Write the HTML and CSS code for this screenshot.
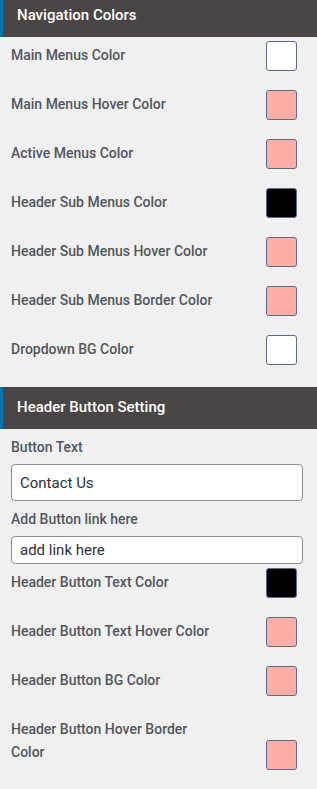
FILE: index.html
```html
<!DOCTYPE html>
<html lang="en">
<head>
  <meta charset="UTF-8">
  <meta name="viewport" content="width=device-width, initial-scale=1.0">
  <title>Header Settings</title>
  <link rel="stylesheet" href="styles.css">
</head>
<body>
  <div class="painel">
    <section class="grupo">
      <h3 class="grupo-titulo">Navigation Colors</h3>
      <div class="linha"><span class="rotulo">Main Menus Color</span><span class="amostra branco"></span></div>
      <div class="linha"><span class="rotulo">Main Menus Hover Color</span><span class="amostra rosa"></span></div>
      <div class="linha"><span class="rotulo">Active Menus Color</span><span class="amostra rosa"></span></div>
      <div class="linha"><span class="rotulo">Header Sub Menus Color</span><span class="amostra preto"></span></div>
      <div class="linha"><span class="rotulo">Header Sub Menus Hover Color</span><span class="amostra rosa"></span></div>
      <div class="linha"><span class="rotulo">Header Sub Menus Border Color</span><span class="amostra rosa"></span></div>
      <div class="linha"><span class="rotulo">Dropdown BG Color</span><span class="amostra branco"></span></div>
    </section>

    <section class="grupo">
      <h3 class="grupo-titulo">Header Button Setting</h3>
      <div class="campo">
        <label class="rotulo" for="btn-texto">Button Text</label>
        <input type="text" id="btn-texto" class="entrada alta" value="Contact Us">
      </div>
      <div class="campo">
        <label class="rotulo" for="btn-link">Add Button link here</label>
        <input type="text" id="btn-link" class="entrada" value="add link here">
      </div>
      <div class="linha"><span class="rotulo">Header Button Text Color</span><span class="amostra preto"></span></div>
      <div class="linha"><span class="rotulo">Header Button Text Hover Color</span><span class="amostra rosa"></span></div>
      <div class="linha"><span class="rotulo">Header Button BG Color</span><span class="amostra rosa"></span></div>
      <div class="linha dupla"><span class="rotulo">Header Button Hover Border Color</span><span class="amostra rosa"></span></div>
    </section>
  </div>
</body>
</html>
```

FILE: styles.css
```css
:root {
  --fundo: #f0f0f0;
  --titulo-fundo: #4a4645;
  --azul: #0a73aa;
  --texto: #50575e;
  --rosa: #ffaea7;
  --borda-amostra: #5b6a8a;
}

* {
  box-sizing: border-box;
  margin: 0;
  padding: 0;
}

body {
  font-family: Roboto, "Liberation Sans", sans-serif;
  background-color: var(--fundo);
  color: var(--texto);
  width: 317px;
  overflow: hidden;
}

.painel {
  margin-top: -5px;
}

.grupo {
  padding-bottom: 7px;
}

.grupo-titulo {
  height: 42px;
  line-height: 41px;
  padding-left: 14px;
  background-color: var(--titulo-fundo);
  border-left: 3px solid var(--azul);
  color: #fff;
  font-size: 15px;
  font-weight: 500;
}

.rotulo {
  display: block;
  font-size: 14px;
  font-weight: 500;
  line-height: 23px;
  color: var(--texto);
}

.linha {
  display: flex;
  align-items: flex-start;
  justify-content: space-between;
  padding: 4px 20px 15px 11px;
}

.linha .rotulo {
  padding-top: 2.5px;
  max-width: 205px;
}

.amostra {
  width: 31px;
  height: 30px;
  border: 1px solid var(--borda-amostra);
  border-radius: 3px;
  flex-shrink: 0;
}

.amostra.branco { background-color: #fff; }
.amostra.rosa { background-color: var(--rosa); }
.amostra.preto { background-color: #000; }

.linha.dupla .amostra {
  margin-top: 25px;
}

.campo {
  padding: 6.5px 14px 0 11px;
}

.campo .rotulo {
  margin-bottom: 5.5px;
}

.entrada {
  display: block;
  width: 100%;
  height: 28px;
  padding: 0 8px;
  background: #fff;
  border: 1px solid #8c8f94;
  border-radius: 4px;
  font-family: Roboto, "Liberation Sans", sans-serif;
  font-size: 15px;
  color: #2c3338;
}

.entrada.alta {
  height: 37px;
}
```
